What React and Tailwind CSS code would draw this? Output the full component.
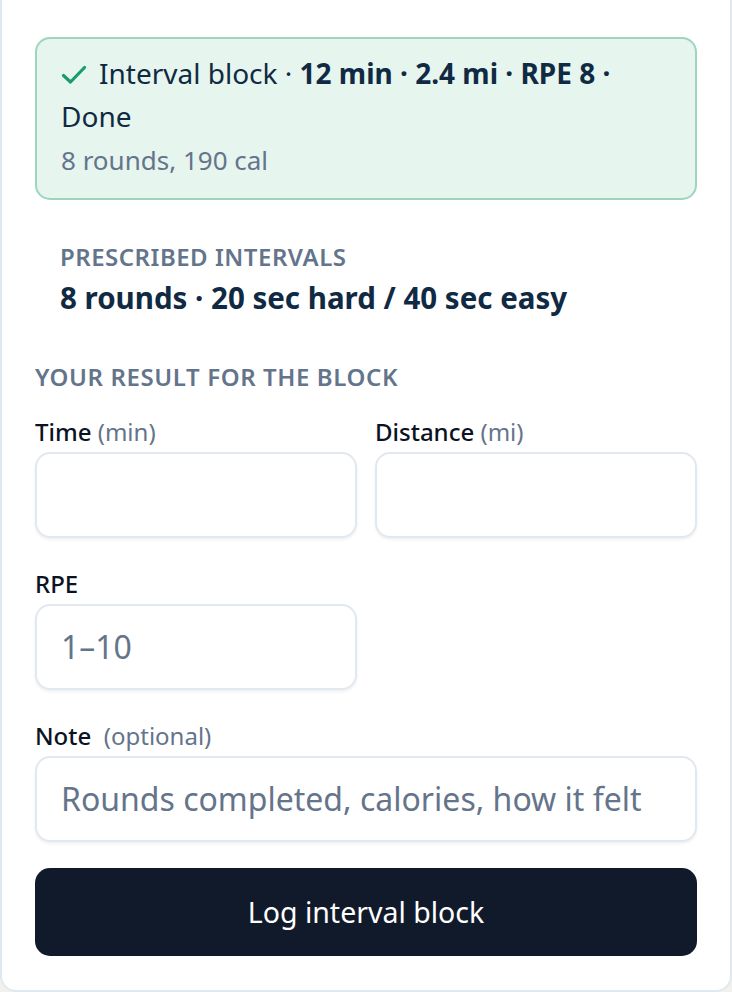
import React from "react";

function Check() {
  return (
    <svg width="26" height="20" viewBox="0 0 26 20" fill="none" className="inline-block align-baseline mr-[12px] relative top-[1px]">
      <path d="M2.5 10.5 L9.5 17 L23.5 2.5" stroke="#1a9b6c" strokeWidth="3.2" strokeLinecap="round" strokeLinejoin="round" />
    </svg>
  );
}

function Field({ label, hint, placeholder, className = "" }) {
  return (
    <div className={className}>
      <div className="h-[30px] leading-[30px] text-[24px] text-[#0b1322] font-medium whitespace-pre">
        {label}
        {hint ? <span className="text-[#64748b] font-normal">{hint}</span> : null}
      </div>
      <div className="mt-[5px] h-[86px] rounded-[15px] border-2 border-[#e2e8f0] bg-white shadow-[0_2px_3px_rgba(15,23,42,0.06)] flex items-center px-[24px]">
        {placeholder ? (
          <span className="text-[32px] text-[#64748b]">{placeholder}</span>
        ) : null}
      </div>
    </div>
  );
}

export default function App() {
  return (
    <div className="min-h-screen bg-[#f3f1ec]" style={{ fontFamily: '"Noto Sans", "Open Sans", sans-serif' }}>
      <div className="w-[732px] bg-white border-x-2 border-b-2 border-[#e2e8f0] rounded-b-[16px] px-[33px] pt-[37px] pb-[34px]">
        <div className="rounded-[15px] border-2 border-[#9dd5be] bg-[#e6f5ee] px-[24px] pt-[13px] pb-[20px]">
          <div className="text-[28px] leading-[43px] text-[#102a43]">
            <Check />
            Interval block · <span className="font-bold">12 min · 2.4 mi · RPE 8 ·</span>
            <br />
            Done
          </div>
          <div className="mt-[4px] text-[26px] leading-[36px] text-[#64748b]">8 rounds, 190 cal</div>
        </div>

        <div className="pl-[25px] mt-[43px]">
          <div className="text-[24px] leading-[28px] font-semibold tracking-[0.5px] text-[#64748b]">PRESCRIBED INTERVALS</div>
          <div className="mt-[8px] text-[29.5px] leading-[38px] font-bold text-[#102a43]">8 rounds · 20 sec hard / 40 sec easy</div>
        </div>

        <div className="mt-[46px] text-[24px] leading-[28px] font-semibold tracking-[0.6px] text-[#64748b]">YOUR RESULT FOR THE BLOCK</div>

        <div className="mt-[26px] grid grid-cols-2 gap-x-[18px]">
          <Field label="Time " hint="(min)" />
          <Field label="Distance " hint="(mi)" />
        </div>

        <div className="mt-[31px] grid grid-cols-2 gap-x-[18px]">
          <Field label="RPE" placeholder="1–10" />
        </div>

        <Field className="mt-[31px]" label={"Note  "} hint="(optional)" placeholder="Rounds completed, calories, how it felt" />

        <button className="mt-[26px] w-full h-[88px] rounded-[15px] bg-[#111a2b] text-white text-[28.5px] flex items-center justify-center">
          Log interval block
        </button>
      </div>
    </div>
  );
}
